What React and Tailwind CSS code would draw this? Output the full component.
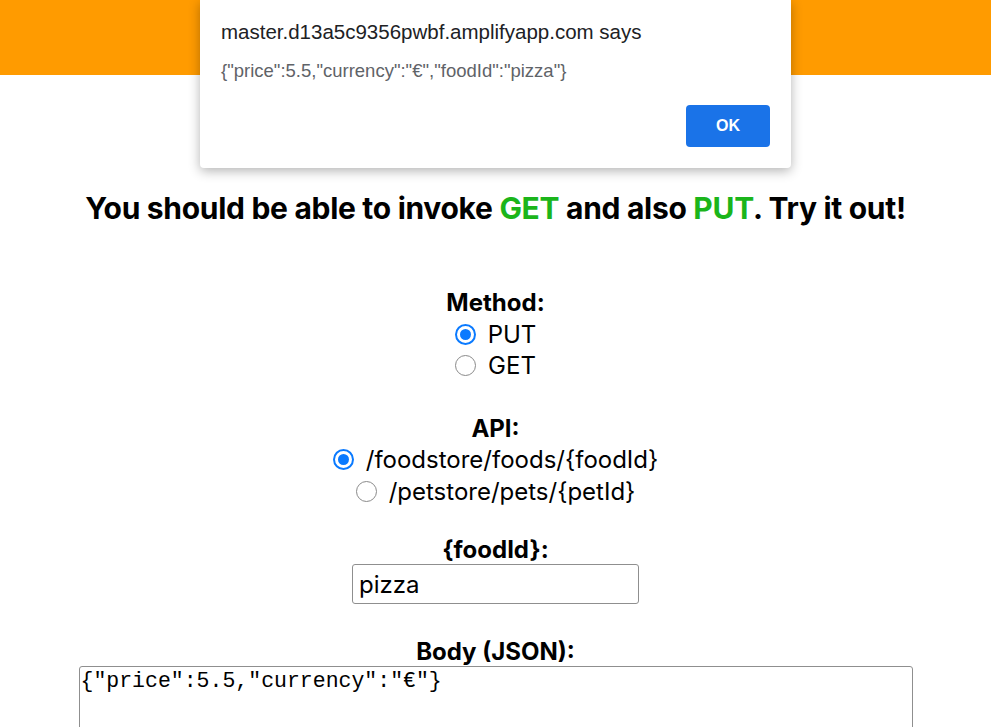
import React, { useState } from 'react';

const Radio = ({ checked, label, onClick }) => (
  <div onClick={onClick} className="flex items-center justify-center gap-3 h-[31.5px] cursor-pointer">
    {checked ? (
      <span className="w-[21px] h-[21px] rounded-full border-2 border-[#0a7aff] flex items-center justify-center">
        <span className="w-[11px] h-[11px] rounded-full bg-[#0a7aff]" />
      </span>
    ) : (
      <span className="w-[21px] h-[21px] rounded-full border border-[#8a8a8a] bg-white" />
    )}
    <span>{label}</span>
  </div>
);

const App = () => {
  const [method, setMethod] = useState('PUT');
  const [api, setApi] = useState('food');
  const [foodId, setFoodId] = useState('pizza');
  const [body, setBody] = useState('{"price":5.5,"currency":"€"}');

  return (
    <div className="relative min-h-screen bg-white text-black font-['Inter',sans-serif] overflow-hidden">
      {/* top bar */}
      <div className="h-[75px] bg-[#ff9b00]" />

      <div className="flex flex-col items-center">
        <h1 className="mt-[113px] text-[30px] font-bold leading-[40px] tracking-[-0.3px]">
          You should be able to invoke <span className="text-[#1bb51b]">GET</span> and also{' '}
          <span className="text-[#1bb51b]">PUT</span>. Try it out!
        </h1>

        <div className="mt-[59px] flex flex-col items-center text-[24px] leading-[31.5px]">
          <div className="font-bold">Method:</div>
          <Radio checked={method === 'PUT'} label="PUT" onClick={() => setMethod('PUT')} />
          <Radio checked={method === 'GET'} label="GET" onClick={() => setMethod('GET')} />

          <div className="mt-[31px] font-bold">API:</div>
          <Radio checked={api === 'food'} label="/foodstore/foods/{foodId}" onClick={() => setApi('food')} />
          <Radio checked={api === 'pet'} label="/petstore/pets/{petId}" onClick={() => setApi('pet')} />

          <div className="mt-[29px] font-bold leading-[28px]">{api === 'food' ? '{foodId}:' : '{petId}:'}</div>
          <input
            value={foodId}
            onChange={(e) => setFoodId(e.target.value)}
            className="w-[287px] h-[40px] border border-[#8f8f8f] rounded-[3px] px-[6px] text-[24px] outline-none"
          />

          <div className="mt-[34px] font-bold leading-[28px]">Body (JSON):</div>
        </div>

        <textarea
          value={body}
          onChange={(e) => setBody(e.target.value)}
          className="w-[834px] h-[120px] border border-[#8f8f8f] rounded-[3px] px-[1px] py-0 text-[21.5px] leading-[28px] font-['Liberation_Mono',monospace] outline-none resize-none"
        />
      </div>

      {/* alert dialog */}
      <div className="absolute left-[200px] top-0 w-[591px] h-[168px] bg-white shadow-[0_3px_12px_rgba(0,0,0,0.3)] rounded-b-[4px] pl-[21px] pr-[21px] pt-[19px]">
        <div className="text-[20.5px] leading-[26px] text-[#202124] font-['Liberation_Sans',sans-serif]">
          master.d13a5c9356pwbf.amplifyapp.com says
        </div>
        <div className="mt-[14px] text-[18.5px] leading-[24px] text-[#5f6368] font-['Liberation_Sans',sans-serif]">
          {'{"price":5.5,"currency":"€","foodId":"pizza"}'}
        </div>
        <div className="flex justify-end mt-[22px]">
          <button className="w-[84px] h-[42px] rounded-[4px] bg-[#1a73e8] text-white text-[16px] font-semibold font-['Liberation_Sans',sans-serif]">
            OK
          </button>
        </div>
      </div>
    </div>
  );
};

export default App;
